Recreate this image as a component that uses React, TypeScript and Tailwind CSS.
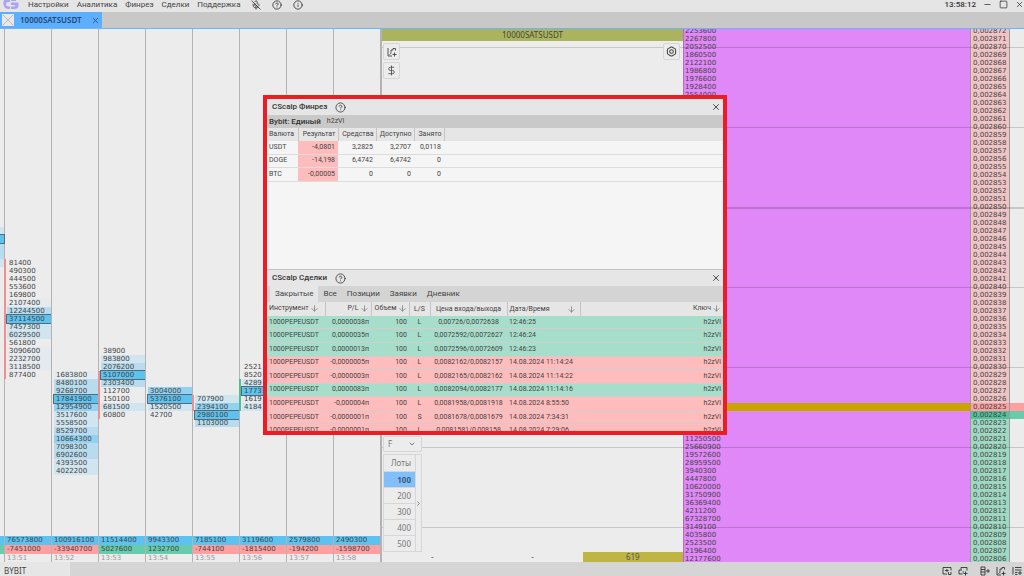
import React, { useState } from 'react';
import { CircleHelp, Info, X, Minus, Square, MicOff, ArrowDown, ChevronDown, ChevronRight, DollarSign, Bolt } from 'lucide-react';
import clsx from 'clsx';

const ROW = 8;

// heat levels of a cluster cell, 5 is the max volume cell
const HEAT = ['', 'bg-[#e4eaee]', 'bg-[#d0e5ef]', 'bg-[#b8dced]', 'bg-[#92d1f0]', 'bg-[#5cc3f1] outline outline-1 outline-[#5b6a72]'];

interface Cluster {
  time: string;
  total: string;
  delta: string;
  start: number;
  cells: [string, number][];
  bar?: { color: string; from: number; rows: number };
}

const clusters: Cluster[] = [
  {
    time: '13:51', total: '76573800', delta: '-7451000', start: 29,
    bar: { color: 'bg-[#f08f8f]', from: 29, rows: 15 },
    cells: [['81400', 0], ['490300', 0], ['444500', 0], ['553600', 0], ['169800', 0], ['2107400', 1], ['12244500', 3], ['37114500', 5], ['7457300', 2], ['6029500', 2], ['561800', 0], ['3090600', 1], ['2232700', 1], ['3118500', 1], ['877400', 0]],
  },
  {
    time: '13:52', total: '100916100', delta: '-33940700', start: 43,
    cells: [['1683800', 1], ['8480100', 3], ['9268700', 3], ['17841900', 5], ['12954900', 4], ['3517600', 2], ['5558500', 2], ['8529700', 3], ['10664300', 4], ['7098300', 3], ['6902600', 3], ['4393500', 2], ['4022200', 2]],
  },
  {
    time: '13:53', total: '11514400', delta: '5027600', start: 40,
    bar: { color: 'bg-[#f08f8f]', from: 43, rows: 6 },
    cells: [['38900', 0], ['983800', 2], ['2076200', 3], ['5107000', 5], ['2303400', 3], ['112700', 0], ['150100', 0], ['681500', 2], ['60800', 0]],
  },
  {
    time: '13:54', total: '9943300', delta: '1232700', start: 45,
    cells: [['3004000', 4], ['5376100', 5], ['1520500', 2], ['42700', 0]],
  },
  {
    time: '13:55', total: '7185100', delta: '-744100', start: 46,
    bar: { color: 'bg-[#f08f8f]', from: 46, rows: 2 },
    cells: [['707900', 2], ['2394100', 4], ['2980100', 5], ['1103000', 3]],
  },
  {
    time: '13:56', total: '3119600', delta: '-1815400', start: 42,
    bar: { color: 'bg-[#4cc090]', from: 44, rows: 4 },
    cells: [['2521', 0], ['8520', 0], ['4289', 2], ['1773', 5], ['1619', 1], ['4184', 2]],
  },
  { time: '13:57', total: '2579800', delta: '-194200', start: 0, cells: [] },
  { time: '13:58', total: '2490300', delta: '-1598700', start: 0, cells: [] },
];

const topVolumes = ['2253600', '2267800', '2052500', '1860500', '2122100', '1986800', '1976600', '1928400', '2554000'];
const bottomVolumes = ['11250500', '25660900', '19572600', '28959500', '3940300', '4447800', '10620000', '31750900', '36369400', '4211200', '67328700', '3149100', '4035800', '2523500', '2196400', '12177600'];

const prices = Array.from({ length: 67 }, (_, i) => 2872 - i);

const balances = [
  ['USDT', '-4,0801', '3,2825', '3,2707', '0,0118'],
  ['DOGE', '-14,198', '6,4742', '6,4742', '0'],
  ['BTC', '-0,00005', '0', '0', '0'],
];

const trades = [
  ['0,0000038п', 'L', '0,00726/0,0072638', '12:46:25'],
  ['0,0000035п', 'L', '0,0072592/0,0072627', '12:46:24'],
  ['0,0000013п', 'L', '0,0072596/0,0072609', '12:46:23'],
  ['-0,0000005п', 'L', '0,0082162/0,0082157', '14.08.2024 11:14:24'],
  ['-0,0000003п', 'L', '0,0082165/0,0082162', '14.08.2024 11:14:22'],
  ['0,0000083п', 'L', '0,0082094/0,0082177', '14.08.2024 11:14:16'],
  ['-0,000004п', 'L', '0,0081958/0,0081918', '14.08.2024 8:55:50'],
  ['-0,0000001п', 'S', '0,0081678/0,0081679', '14.08.2024 7:34:31'],
  ['-0,0000001п', 'L', '0,0081581/0,008158', '14.08.2024 7:29:06'],
];

const Logo = () => (
  <svg width="17" height="14" viewBox="0 0 17 14" aria-hidden="true">
    <path d="M8 0H3.5C1.500 1 1 3 1.500 5.500C2 8.500 4 10 7 10H8V7.500H6.500C4.800 7.500 4 6.300 4 5C4 3.800 4.800 3 6.500 3H8Z" fill="#a9a4f5" />
    <path d="M9 0H14V2H9ZM9 3.500H16.500V6.500C16.500 9 15 10 12.500 10H9V7.500H13V6H9Z" fill="#a9a4f5" />
  </svg>
);

const ChartPlusIcon = ({ size = 10 }: { size?: number }) => (
  <svg width={size} height={size} viewBox="0 0 20 20" fill="none" stroke="currentColor" strokeWidth="1.800">
    <path d="M2 2V18H10M5 15C8 14 8 12 8 9V6H12V3H17V7M15 11V19M11 15H19" />
  </svg>
);

const ClusterColumn = ({ c }: { c: Cluster }) => (
  <div className="relative flex min-w-0 flex-1 flex-col border-r border-[#b3b3b3]">
    {c.bar && (
      <div className={clsx('absolute -left-px w-0.5', c.bar.color)} style={{ top: c.bar.from * ROW - 2, height: c.bar.rows * ROW }} />
    )}
    <div className="min-h-0 flex-1 overflow-hidden pl-0.5" style={{ paddingTop: c.start * ROW - 2 }}>
      {c.cells.map(([value, heat], i) => (
        <div key={i} className={clsx('h-2 pl-0.5 leading-2', HEAT[heat])}>{value}</div>
      ))}
    </div>
    <div className="h-[9px] bg-[#5cc3f1] pl-0.5 leading-[9px]">{c.total}</div>
    <div className={clsx('h-[9px] pl-0.5 leading-[9px]', c.delta.startsWith('-') ? 'bg-[#ff9f9f]' : 'bg-[#68cbab]')}>{c.delta}</div>
    <div className="h-2 pl-0.5 leading-2 text-[#999]">{c.time}</div>
  </div>
);

const WindowTitle = ({ title }: { title: string }) => (
  <div className="flex h-4 items-center bg-[#e6e6e6] pl-[5px] pr-0.5 text-[8px] font-medium text-[#333]">
    {title}
    <button aria-label={`Справка: ${title}`} className="ml-2"><CircleHelp size={11} strokeWidth={1.75} /></button>
    <button aria-label={`Закрыть: ${title}`} className="ml-auto"><X size={10} strokeWidth={2} /></button>
  </div>
);

const Th = ({ children, arrow, align = 'text-left' }: { children?: React.ReactNode; arrow?: boolean; align?: string }) => (
  <th className={clsx('whitespace-nowrap border-r border-[#c4c4c4] bg-clip-padding px-0.5 font-normal', align)}>
    {children}
    {arrow && <ArrowDown size={9} strokeWidth={2} className="ml-px inline align-middle text-[#777]" />}
  </th>
);

const BalanceTable = () => (
  <table className="h-[54px] w-full table-fixed border-collapse text-[7px] leading-[9px]">
    <colgroup>
      <col className="w-[31px]" /><col className="w-10" /><col className="w-[38px]" /><col className="w-[38px]" /><col className="w-[30px]" /><col />
    </colgroup>
    <thead className="h-[13px] bg-[#e6e6e6]">
      <tr>
        <Th>Валюта</Th><Th align="text-right">Результат</Th><Th align="text-right">Средства</Th><Th align="text-right">Доступно</Th><Th align="text-right">Занято</Th><td />
      </tr>
    </thead>
    <tbody>
      {balances.map(row => (
        <tr key={row[0]} className="border-b border-[#dcdcdc]">
          {row.map((v, i) => (
            <td key={i} className={clsx('pl-0.5 pr-[3px]', i > 0 && 'text-right', i === 1 && 'bg-[#ffbcbc]')}>{v}</td>
          ))}
          <td />
        </tr>
      ))}
    </tbody>
  </table>
);

const TradesTable = () => (
  <table className="h-[136px] w-full table-fixed border-collapse text-[7px] leading-[9px]">
    <colgroup>
      <col className="w-[58px]" /><col className="w-[46px]" /><col className="w-[38px]" /><col className="w-[21px]" /><col className="w-[77px]" /><col className="w-[73px]" /><col />
    </colgroup>
    <thead className="h-3.5 bg-[#e6e6e6]">
      <tr>
        <Th arrow>Инструмент</Th>
        <Th arrow align="text-right">P/L</Th>
        <Th arrow align="text-right">Объем</Th>
        <Th align="text-center">L/S</Th>
        <Th align="text-center">Цена входа/выхода</Th>
        <th className="border-r border-[#c4c4c4] px-0.5 font-normal">
          <span className="flex items-center justify-between">Дата/Время<ArrowDown size={9} strokeWidth={2} className="mr-0.5 text-[#777]" /></span>
        </th>
        <th className="whitespace-nowrap px-0.5 text-right font-normal">
          Ключ<ArrowDown size={9} strokeWidth={2} className="ml-px inline align-middle text-[#777]" />
        </th>
      </tr>
    </thead>
    <tbody>
      {trades.map(([pl, side, price, date], i) => (
        <tr key={i} className={clsx('whitespace-nowrap border-b border-[#d4cccc]', pl.startsWith('-') ? 'bg-[#ffbcbc]' : 'bg-[#a6decb]')}>
          <td className="px-0.5">1000PEPEUSDT</td>
          <td className="px-0.5 text-right">{pl}</td>
          <td className="px-0.5 text-right">100</td>
          <td className="text-center">{side}</td>
          <td className="text-center">{price}</td>
          <td className="px-0.5">{date}</td>
          <td className="px-0.5 text-right">h2zVi</td>
        </tr>
      ))}
    </tbody>
  </table>
);

const ReportWindow = () => {
  const [tab, setTab] = useState('Закрытые');
  return (
    <section className="absolute left-[263px] top-[95px] z-20 flex h-[340px] w-[464px] flex-col overflow-hidden border-4 border-[#ed1c24] bg-[#f5f5f5] font-[Roboto,sans-serif] text-[#444]">
      <div className="h-[170px] shrink-0">
        <WindowTitle title="CScalp Финрез" />
        <div className="flex h-[13px] items-center gap-1.5 bg-[#c9c9c9] px-0.5 text-[7px]">
          <b className="text-[8px] font-medium text-[#333]">Bybit: Единый</b>h2zVi
        </div>
        <BalanceTable />
      </div>
      <div className="min-h-0 flex-1 overflow-hidden border-t border-[#c4c4c4]">
        <WindowTitle title="CScalp Сделки" />
        <div role="tablist" className="flex h-4 bg-[#d4d4d4] pl-[3px] text-[8px]">
          {['Закрытые', 'Все', 'Позиции', 'Заявки', 'Дневник'].map(t => (
            <button
              key={t}
              role="tab"
              aria-selected={t === tab}
              onClick={() => setTab(t)}
              className={clsx('px-[5px]', t === tab && 'bg-[#e6e6e6]')}
            >
              {t}
            </button>
          ))}
        </div>
        <TradesTable />
      </div>
    </section>
  );
};

const ChartPane = () => {
  const [lot, setLot] = useState(100);
  const box = 'flex items-center justify-center border border-[#d6d6d6] bg-[#ececec]';
  return (
    <div className="relative z-10 flex min-w-0 flex-col border-l border-[#b3b3b3]">
      <div className="h-3 bg-[#abb45c] text-center text-[8px] leading-3 text-[#444]">10000SATSUSDT</div>
      <div className="flex min-h-0 flex-1 flex-col justify-between pt-0.5">
        <div className="flex items-start justify-between pl-px pr-[3px]">
          <div className="flex flex-col gap-0.5">
            <button aria-label="Добавить график" className={clsx(box, 'size-[17px] rounded-xs')}><ChartPlusIcon /></button>
            <button aria-label="Валюта" className={clsx(box, 'size-[17px] rounded-xs')}><DollarSign size={11} strokeWidth={1.75} /></button>
          </div>
          <button aria-label="Настройки стакана" className={clsx(box, 'size-[17px] rounded-xs')}><Bolt size={11} strokeWidth={2.25} /></button>
        </div>
        <div className="ml-px w-[39px] space-y-0.5 text-[8px] text-[#777]">
          <div className="relative">
            <select aria-label="Режим" className="block h-4 w-full appearance-none rounded-xs border border-[#d6d6d6] bg-[#ececec] pl-1">
              <option>F</option>
            </select>
            <ChevronDown size={8} strokeWidth={3} className="pointer-events-none absolute right-1.5 top-1" />
          </div>
          <div className="flex border border-[#d6d6d6] bg-[#ececec]">
            <div className="flex-1">
              <div className="h-4 pr-1 text-right leading-4">Лоты</div>
              {[100, 200, 300, 400, 500].map(n => (
                <button
                  key={n}
                  onClick={() => setLot(n)}
                  className={clsx('block h-4 w-full border-t border-[#d6d6d6] pr-1 text-right leading-4', n === lot && 'bg-[#80bffa] font-bold text-[#3f5b7a]')}
                >
                  {n}
                </button>
              ))}
            </div>
            <button aria-label="Развернуть" className="w-1.5 border-l border-[#d6d6d6]"><ChevronRight size={7} strokeWidth={3} className="-ml-px" /></button>
          </div>
        </div>
      </div>
      <div className="grid h-[10px] grid-cols-3 text-center text-[8px] leading-[10px] text-[#555]">
        <span>-</span><span>-</span><span className="bg-[#bfb544]">619</span>
      </div>
    </div>
  );
};

export default function App() {
  return (
    <div className="relative flex h-screen flex-col overflow-hidden bg-[#ececec] font-['Noto_Sans',sans-serif] text-[8px] text-[#444]">
      <header className="flex h-3 shrink-0 items-center bg-[#e5e5e5] font-[Roboto,sans-serif] text-[8px] text-[#444]">
        <a href="#" aria-label="CScalp" className="w-7 pl-0.5"><Logo /></a>
        <nav className="flex items-center gap-2 pb-[3px]">
          {['Настройки', 'Аналитика', 'Финрез', 'Сделки', 'Поддержка'].map(m => <a key={m} href="#">{m}</a>)}
        </nav>
        <div className="ml-2.5 flex items-center gap-[11px] pb-[3px] text-[#333]">
          <button aria-label="Звук"><MicOff size={10} /></button>
          <button aria-label="Справка"><CircleHelp size={10} /></button>
          <button aria-label="О программе"><Info size={10} /></button>
        </div>
        <div className="ml-auto flex items-center gap-[7px] pb-[3px] text-[#333]">
          <span className="font-medium">13:58:12</span>
          <button aria-label="Свернуть"><Minus size={9} /></button>
          <button aria-label="Развернуть окно"><Square size={9} /></button>
          <button aria-label="Закрыть окно"><X size={9} /></button>
        </div>
      </header>

      <div className="flex h-[17px] shrink-0 border-b border-[#6db5fb] bg-[#c8c8c8]">
        <div className="flex w-[102px] items-center bg-[#5eaeff] px-0.5 text-[#24496e]">
          <svg width="12" height="12" viewBox="0 0 12 12" className="bg-[#e8e8e8]"><path d="M1 1L11 11M11 1L1 11" stroke="#bbb" /></svg>
          <span className="ml-1.5 font-semibold">10000SATSUSDT</span>
          <button aria-label="Закрыть вкладку" className="ml-auto"><X size={9} /></button>
        </div>
      </div>

      <main className="grid min-h-0 flex-1 grid-cols-[381fr_302fr_287fr_40px_14px] grid-rows-[100%] overflow-hidden">
        <div className="flex min-w-0 overflow-hidden font-['DejaVu_Sans',sans-serif] text-[7px]">
          <div className="flex w-[5px] shrink-0 flex-col border-r border-[#b3b3b3]">
            <div className="flex-1" style={{ paddingTop: 25 * ROW - 2 }}>
              {[2, 5, 3, 3, 2].map((h, i) => <div key={i} className={clsx('h-2', HEAT[h])} />)}
            </div>
            <div className="h-[9px] bg-[#5cc3f1]" />
            <div className="h-[9px] bg-[#68cbab]" />
            <div className="h-2" />
          </div>
          {clusters.map(c => <ClusterColumn key={c.time} c={c} />)}
        </div>

        <div className="relative col-span-4 grid min-w-0 grid-cols-[302fr_287fr_40px_14px] grid-rows-[100%] font-['DejaVu_Sans',sans-serif] text-[7px]">
          <div className="grid min-w-0 font-['Noto_Sans',sans-serif]"><ChartPane /></div>
          <div className="overflow-hidden border-l border-[#b070c8] bg-[#e088f8] leading-2">
            <div className="-mt-0.5">
              {prices.map((p, i) => (
                <div key={p} className={clsx('h-2 pl-px', p === 2825 && 'bg-[#c9a400]')}>
                  {topVolumes[i] ?? bottomVolumes[i - 51]}
                </div>
              ))}
            </div>
          </div>
          <div className="overflow-hidden border-x border-[#9a9a9a] leading-2">
            <div className="-mt-0.5">
              {prices.map(p => (
                <div
                  key={p}
                  className={clsx('h-2 pl-0.5', p > 2825 && 'bg-[#eec4c4]', p === 2825 && 'bg-[#ff9f9f]', p === 2824 && 'bg-[#54c09c]', p < 2824 && 'bg-[#9fd8c3]')}
                >
                  {`0,00${p}`}
                </div>
              ))}
            </div>
          </div>
          <div className="overflow-hidden">
            <div className="-mt-0.5">
              {prices.map(p => (
                <div key={p} className={clsx('h-2', p === 2825 && 'bg-[#ff9f9f]', p === 2824 && 'bg-[#68cbab]')} />
              ))}
            </div>
          </div>
          {/* price grid: a line on every tenth tick, bold one on every fiftieth */}
          {prices.map((p, i) => p % 10 === 0 && (
            <div
              key={p}
              className={clsx('pointer-events-none absolute inset-x-0 bg-black/15', p % 50 === 0 ? 'h-0.5' : 'h-px')}
              style={{ top: i * ROW + 2 }}
            />
          ))}
        </div>
      </main>

      <footer className="flex h-3.5 shrink-0 items-end justify-between bg-[#d5d5d5]">
        <div className="h-full w-[70px] bg-[#e6e6e6] pl-1 pt-1 leading-[10px]">BYBIT</div>
        <div className="flex items-center gap-1.5 pr-0.5 text-[#333]">
          <button aria-label="Добавить вкладку">
            <svg width="10" height="10" viewBox="0 0 20 20" fill="none" stroke="currentColor" strokeWidth="1.800"><path d="M10 16H2V3H18V9M6 9H13M10 6V12M13 12V17H18M18 12V17" /></svg>
          </button>
          <button aria-label="Добавить окно">
            <svg width="10" height="10" viewBox="0 0 20 20" fill="none" stroke="currentColor" strokeWidth="1.800"><path d="M6 7V3H18V9M9 16H2V8H8M15 11V19M11 15H19M9 12H12" /></svg>
          </button>
          <button aria-label="Добавить стакан" className="ml-1.5">
            <svg width="10" height="10" viewBox="0 0 20 20" fill="none" stroke="currentColor" strokeWidth="1.800"><path d="M2 2H10V18H2ZM2 7H10M2 12H10M16 6V14M12 10H20" /></svg>
          </button>
          <button aria-label="Добавить график"><ChartPlusIcon /></button>
          <button aria-label="Добавить ленту">
            <svg width="10" height="10" viewBox="0 0 20 20" fill="none" stroke="currentColor" strokeWidth="1.800"><path d="M2 2V17M6 3H19M6 8H19M6 13H11M6 17H11M16 10V18M12 14H20" /></svg>
          </button>
        </div>
      </footer>

      <ReportWindow />
    </div>
  );
}
